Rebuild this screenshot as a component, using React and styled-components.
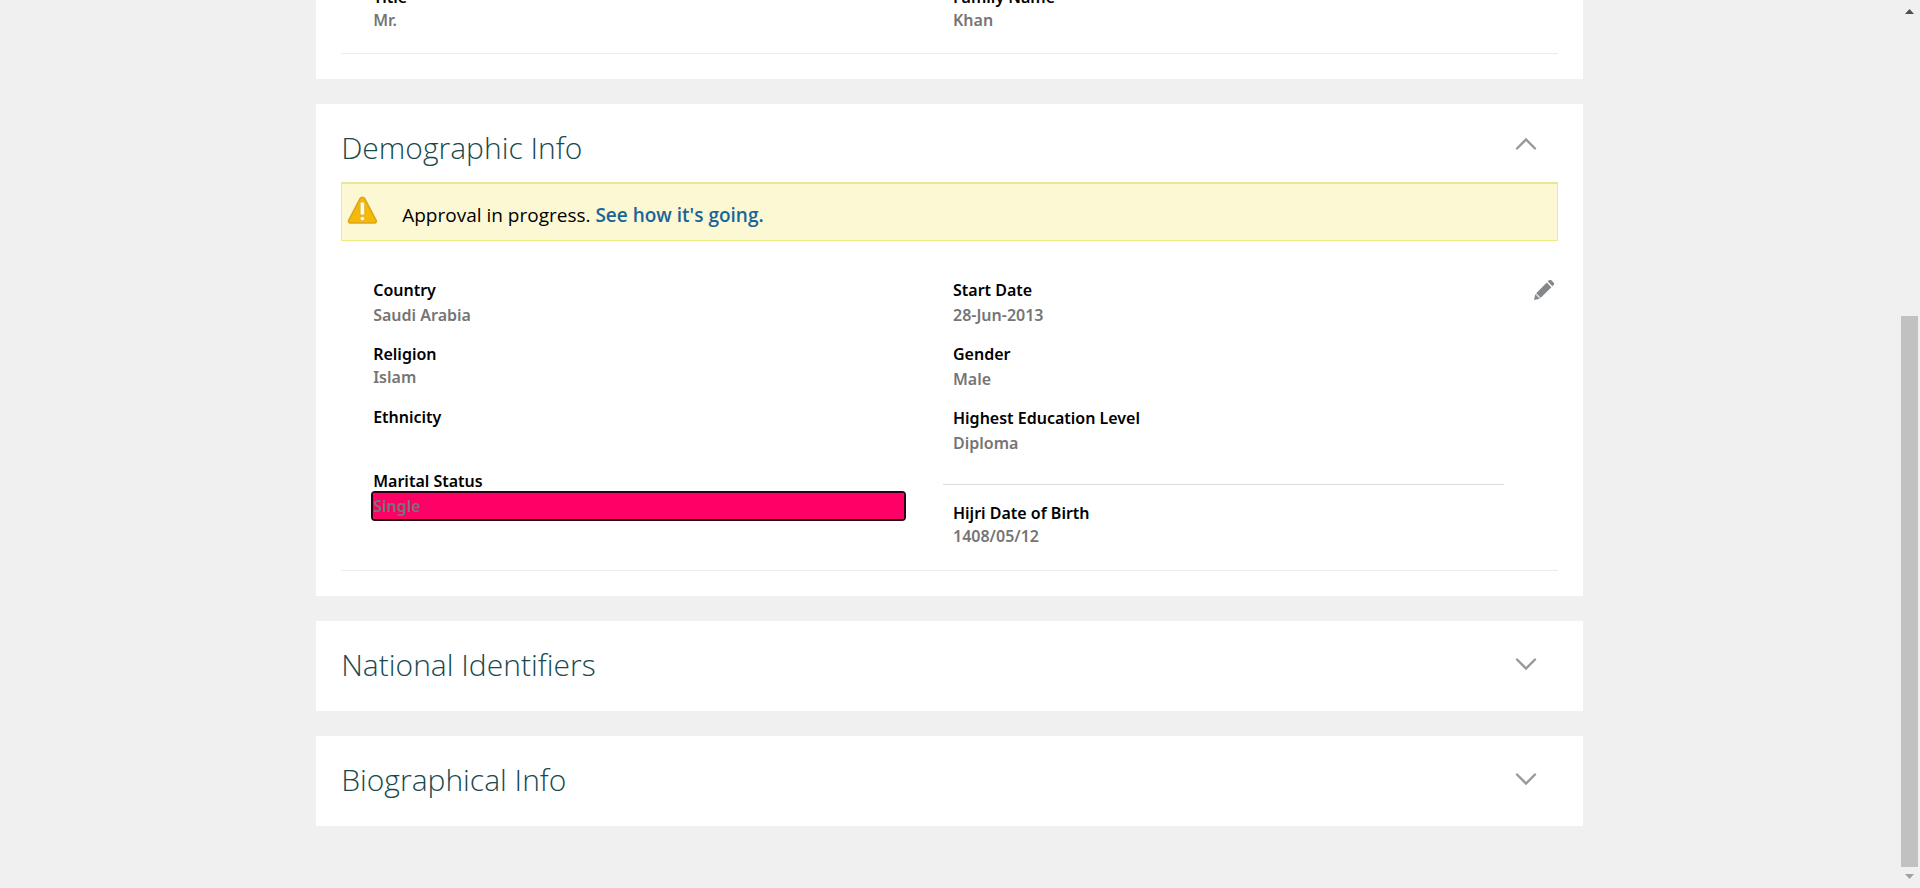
import React, { useState } from "react";
import styled, { createGlobalStyle } from "styled-components";

const GlobalStyle = createGlobalStyle`
  *, *::before, *::after { box-sizing: border-box; }
  body {
    margin: 0;
    background: #f0f0f0;
    color: #000;
    font-family: "Open Sans", "Noto Sans", sans-serif;
    font-size: 16px;
  }
  h2, dl, dd, p { margin: 0; }
  button { border: 0; padding: 0; background: none; color: inherit; cursor: pointer; }
`;

const Page = styled.div`
  display: flex;
  height: 100vh;
  overflow: hidden;
`;

const Content = styled.main`
  flex: 1;
  min-width: 0;
  overflow: hidden;
`;

const CardStack = styled.div`
  display: flex;
  flex-direction: column;
  gap: 25px;
  width: 66.7%;
  margin: -32px auto 0;
`;

const Card = styled.section`
  background: #fff;
  padding: 0 25px ${(p) => (p.$open ? "25px" : "12px")};
`;

const CardHeader = styled.header`
  display: flex;
  justify-content: space-between;
  align-items: flex-start;
  height: 78px;
  padding: 20px 18px 0 0;
`;

const CardTitle = styled.h2`
  font-size: 30px;
  line-height: 48px;
  font-weight: 300;
  color: #17494d;
`;

const ToggleButton = styled.button`
  display: grid;
  place-items: center;
  width: 28px;
  height: ${(p) => (p.$open ? "40px" : "46px")};
`;

const Banner = styled.div`
  display: flex;
  align-items: flex-start;
  gap: 24px;
  height: 59px;
  padding: 12px 5px;
  background: #fcf8d4;
  border: 1px solid #eeea84;
  border-top: 2px solid #e6e69c;
`;

const BannerText = styled.p`
  font-size: 19px;
  line-height: 38px;
`;

const BannerLink = styled.a`
  color: #1a6498;
  font-weight: 600;
  text-decoration: none;
`;

const CardBody = styled.div`
  display: grid;
  grid-template-columns: 531fr 561fr 15px;
  column-gap: 39px;
  padding: ${(p) => (p.$first ? "17px" : "37px")} 0 0 32px;
  border-bottom: 1px solid #ececec;
  min-height: ${(p) => (p.$first ? "0" : "330px")};
`;

const FieldList = styled.dl`
  display: flex;
  flex-direction: column;
  gap: 14px;
  padding-left: ${(p) => (p.$inset ? "10px" : "0")};
  padding-bottom: 19px;
`;

const ExtraList = styled(FieldList)`
  margin-top: 9px;
  padding-top: 16px;
  border-top: 1px solid #dcdcdc;
`;

const Field = styled.div`
  min-height: 49px;
  font-family: "Noto Sans", "Open Sans", sans-serif;
  font-weight: 600;
`;

const Label = styled.dt`
  line-height: 24px;
`;

const Value = styled.dd`
  min-height: ${(p) => (p.$compact ? "22px" : "26px")};
  line-height: ${(p) => (p.$compact ? "22px" : "26px")};
  color: #757575;
  ${(p) =>
    p.$highlight &&
    `
    background: #ff0066;
    outline: 2px solid #2b0013;
    border-radius: 2px;
  `}
`;

const EditButton = styled.button`
  display: grid;
  place-items: center;
  width: 28px;
  height: 24px;
  justify-self: end;
`;

const Scrollbar = styled.div`
  display: flex;
  flex-direction: column;
  align-items: center;
  width: 21px;
  height: 100%;
`;

const ScrollArrow = styled.svg`
  flex: none;
  width: 17px;
  height: 21px;
`;

const ScrollSpace = styled.div`
  flex: 295;
`;

const ScrollThumb = styled.div`
  flex: 551;
  width: 17px;
  background: #c1c1c1;
`;

function Chevron({ up }) {
  return (
    <svg width="22" height="14" viewBox="0 0 22 14" fill="none" stroke="#96989a" strokeWidth="2.4" strokeLinecap="round">
      <path d={up ? "M2 11.5 11 2.5 20 11.5" : "M2 2.5 11 11.5 20 2.5"} />
    </svg>
  );
}

function WarningIcon() {
  return (
    <svg width="31" height="29" viewBox="0 0 31 29" role="img" aria-label="Warning">
      <path
        d="M13.2 2.4C14.2.8 16.6.8 17.6 2.4L29 24.2C29.8 25.8 29 27 27.4 27H3.4C1.8 27 1 25.8 1.8 24.2Z"
        fill="#f5b90a"
        stroke="#dca617"
        strokeWidth="1.6"
      />
      <rect x="13.2" y="6" width="4.4" height="13" rx="1.6" fill="#fffdf0" stroke="#dca617" strokeWidth=".6" />
      <circle cx="15.4" cy="22.6" r="2.2" fill="#fffdf0" stroke="#dca617" strokeWidth=".6" />
    </svg>
  );
}

function PencilIcon() {
  return (
    <svg width="22" height="22" viewBox="0 0 22 22">
      <path d="M1 21 2.2 15.2 6.8 19.8Z" fill="#85888a" />
      <path d="M3.2 14.2 13.8 3.6 18.4 8.2 7.8 18.8Z" fill="#85888a" />
      <path d="M2.2 15.2 3.2 14.2 7.8 18.8 6.8 19.8Z" fill="#c9ccce" />
      <path d="M14.8 2.6 16.2 1.2Q17.2.4 18.2 1.2L20.8 3.8Q21.6 4.8 20.8 5.8L19.4 7.2Z" fill="#85888a" />
    </svg>
  );
}

function FieldItem({ label, value, compact, highlight }) {
  return (
    <Field>
      <Label>{label}</Label>
      <Value $compact={compact} $highlight={highlight}>{value}</Value>
    </Field>
  );
}

function Section({ title, initiallyOpen, children }) {
  const [open, setOpen] = useState(Boolean(initiallyOpen));
  const expanded = open && Boolean(children);
  return (
    <Card $open={expanded}>
      <CardHeader>
        <CardTitle>{title}</CardTitle>
        <ToggleButton
          type="button"
          $open={expanded}
          aria-expanded={expanded}
          aria-label={title}
          onClick={() => setOpen(!open)}
        >
          <Chevron up={expanded} />
        </ToggleButton>
      </CardHeader>
      {expanded && children}
    </Card>
  );
}

export default function App() {
  return (
    <Page>
      <GlobalStyle />
      <Content>
        <CardStack>
          <Card $open>
            <CardBody $first>
              <FieldList>
                <FieldItem label="Title" value="Mr." compact />
              </FieldList>
              <FieldList $inset>
                <FieldItem label="Family Name" value="Khan" compact />
              </FieldList>
            </CardBody>
          </Card>

          <Section title="Demographic Info" initiallyOpen>
            <Banner>
              <WarningIcon />
              <BannerText>
                Approval in progress. <BannerLink href="#approval">See how it's going.</BannerLink>
              </BannerText>
            </Banner>
            <CardBody>
              <FieldList>
                <FieldItem label="Country" value="Saudi Arabia" />
                <FieldItem label="Religion" value="Islam" compact />
                <FieldItem label="Ethnicity" value="" />
                <FieldItem label="Marital Status" value="Single" highlight />
              </FieldList>
              <div>
                <FieldList $inset>
                  <FieldItem label="Start Date" value="28-Jun-2013" />
                  <FieldItem label="Gender" value="Male" />
                  <FieldItem label="Highest Education Level" value="Diploma" />
                </FieldList>
                <ExtraList $inset>
                  <FieldItem label="Hijri Date of Birth" value="1408/05/12" compact />
                </ExtraList>
              </div>
              <EditButton type="button" aria-label="Edit demographic info">
                <PencilIcon />
              </EditButton>
            </CardBody>
          </Section>

          <Section title="National Identifiers" />
          <Section title="Biographical Info" />
        </CardStack>
      </Content>
      <Scrollbar aria-hidden="true">
        <ScrollArrow viewBox="0 0 17 21">
          <path d="M4 14 8.5 9 13 14Z" fill="#505050" />
        </ScrollArrow>
        <ScrollSpace />
        <ScrollThumb />
        <ScrollArrow viewBox="0 0 17 21">
          <path d="M4 7 8.5 12 13 7Z" fill="#a0a0a0" />
        </ScrollArrow>
      </Scrollbar>
    </Page>
  );
}
